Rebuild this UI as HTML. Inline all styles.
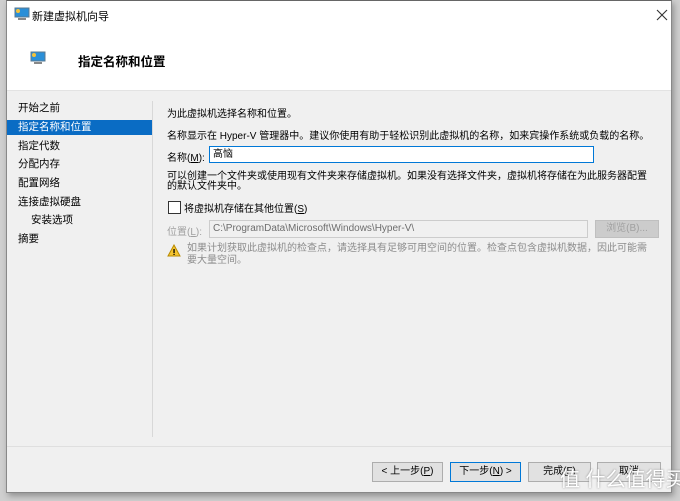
<!DOCTYPE html><html><head><meta charset="utf-8"><style>
body{margin:0;width:680px;height:501px;background:#cfcfcf;position:relative;overflow:hidden;font-family:"Liberation Sans","Noto Sans CJK SC",sans-serif;font-size:10px;color:#000}
.win{position:absolute;left:6px;top:0;width:666px;height:493px;background:#f0f0f0;border:1px solid #888;border-top:1px solid #666;box-sizing:border-box;box-shadow:2px 3px 6px rgba(0,0,0,.3)}
.hdr{position:absolute;left:0;top:0;width:100%;height:89px;background:#fff;border-bottom:1px solid #e3e3e3}
.a{position:absolute;white-space:nowrap}
.nav div{position:absolute;left:0;width:145px;height:15px;line-height:15px;padding-left:11px;box-sizing:border-box;font-size:10.5px}
.btn{position:absolute;top:461px;height:20px;border:1px solid #adadad;background:#e1e1e1;box-sizing:border-box;text-align:center;line-height:18px}
</style></head><body>
<div class="win">
<div class="hdr">
<svg class="a" style="left:7px;top:6px" width="16" height="14"><rect x="1" y="1" width="14" height="9" fill="#2a8fd8" stroke="#5a7890"/><rect x="4" y="11" width="8" height="2" fill="#888"/><circle cx="4" cy="4" r="2" fill="#f5c23a"/></svg>
<div class="a" style="left:25px;top:7px;font-size:11px">新建虚拟机向导</div>
<svg class="a" style="left:649px;top:8px" width="12" height="12"><path d="M1 1L11 11M11 1L1 11" stroke="#333" stroke-width="1.1"/></svg>
<svg class="a" style="left:23px;top:50px" width="16" height="14"><rect x="1" y="1" width="14" height="9" fill="#2a8fd8" stroke="#5a7890"/><rect x="4" y="11" width="8" height="2" fill="#888"/><circle cx="4" cy="4" r="2" fill="#f5c23a"/></svg>
<div class="a" style="left:71px;top:50px;font-size:12.5px;font-weight:bold">指定名称和位置</div>
</div>
<div class="nav">
<div style="top:100px">开始之前</div>
<div style="top:119px;background:#0a6cc4;color:#fff">指定名称和位置</div>
<div style="top:138px">指定代数</div>
<div style="top:156px">分配内存</div>
<div style="top:175px">配置网络</div>
<div style="top:194px">连接虚拟硬盘</div>
<div style="top:212px;padding-left:24px">安装选项</div>
<div style="top:231px">摘要</div>
</div>
<div class="a" style="left:145px;top:100px;width:1px;height:336px;background:#d8d8d8"></div>
<div class="a" style="left:160px;top:104px">为此虚拟机选择名称和位置。</div>
<div class="a" style="left:160px;top:126px">名称显示在 Hyper-V 管理器中。建议你使用有助于轻松识别此虚拟机的名称，如来宾操作系统或负载的名称。</div>
<div class="a" style="left:160px;top:148px">名称(<u>M</u>):</div>
<div class="a" style="left:202px;top:145px;width:385px;height:17px;background:#fff;border:1px solid #0078d7;box-sizing:border-box;padding-left:3px;line-height:15px">高恼</div>
<div class="a" style="left:160px;top:171px;line-height:10px">可以创建一个文件夹或使用现有文件夹来存储虚拟机。如果没有选择文件夹，虚拟机将存储在为此服务器配置<br>的默认文件夹中。</div>
<div class="a" style="left:161px;top:200px;width:11px;height:11px;border:1px solid #333;background:#fff"></div>
<div class="a" style="left:177px;top:199px">将虚拟机存储在其他位置(<u>S</u>)</div>
<div class="a" style="left:160px;top:222px;color:#a0a0a0">位置(<u>L</u>):</div>
<div class="a" style="left:202px;top:219px;width:379px;height:18px;background:#f0f0f0;border:1px solid #ccc;box-sizing:border-box;padding-left:3px;line-height:16px;color:#6d6d6d">C:\ProgramData\Microsoft\Windows\Hyper-V\</div>
<div class="a" style="left:588px;top:219px;width:64px;height:18px;background:#ccc;border:1px solid #bfbfbf;box-sizing:border-box;text-align:center;line-height:16px;color:#a0a0a0">浏览(B)...</div>
<svg class="a" style="left:160px;top:243px" width="14" height="13"><path d="M7 1L13 12H1Z" fill="#f4c430" stroke="#b88a00"/><rect x="6.4" y="5" width="1.3" height="4" fill="#000"/><rect x="6.4" y="9.8" width="1.3" height="1.2" fill="#000"/></svg>
<div class="a" style="left:180px;top:242px;line-height:12px;color:#8c8c8c">如果计划获取此虚拟机的检查点，请选择具有足够可用空间的位置。检查点包含虚拟机数据，因此可能需<br>要大量空间。</div>
<div class="a" style="left:0;top:445px;width:100%;height:1px;background:#dfdfdf"></div>
<div class="btn" style="left:365px;width:71px">&lt; 上一步(<u>P</u>)</div>
<div class="btn" style="left:443px;width:71px;border:1px solid #0078d7">下一步(<u>N</u>) &gt;</div>
<div class="btn" style="left:521px;width:63px">完成(<u>F</u>)</div>
<div class="btn" style="left:590px;width:64px">取消</div>
</div>
<div class="a" style="left:560px;top:463px;font-size:20px;color:#fff;text-shadow:0 0 2px #888">值 什么值得买</div>
</body></html>
